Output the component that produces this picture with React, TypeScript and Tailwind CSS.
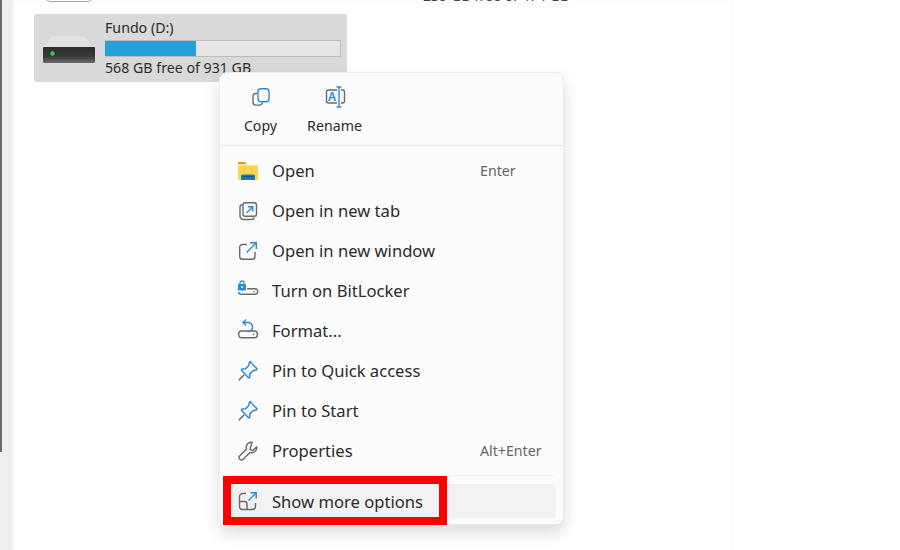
import React from "react";

const G = "#6a6a6a";
const B = "#2b8ad6";

function CopyIcon() {
  return (
    <svg width="20" height="20" viewBox="0 0 20 20" fill="none" strokeWidth="1.4">
      <rect x="7" y="1.7" width="11" height="13" rx="3" stroke={B} />
      <path d="M6 6.5H4.8A2.8 2.8 0 0 0 2 9.3v6a2.8 2.8 0 0 0 2.8 2.8h3.7a3 3 0 0 0 2.9-2.6" stroke={G} />
    </svg>
  );
}
function RenameIcon() {
  return (
    <svg width="22" height="22" viewBox="0 0 22 22" fill="none" strokeWidth="1.4">
      <path d="M12 4H3.5A2 2 0 0 0 1.5 6v9a2 2 0 0 0 2 2H12M16 4h1.5a2 2 0 0 1 2 2v9a2 2 0 0 1-2 2H16" stroke={G} />
      <path d="M14 1v20M11.5 1h5M11.5 21h5" stroke={B} />
      <text x="7" y="15" textAnchor="middle" fontSize="12" fontWeight="600" fill={B} stroke="none" fontFamily="Noto Sans, sans-serif">A</text>
    </svg>
  );
}
function FolderIcon() {
  return (
    <svg width="20" height="20" viewBox="0 0 20 20">
      <path d="M0 2a1 1 0 0 1 1-1h6l2 2.2H0z" fill="#d9a21b" />
      <path d="M0 4.2h19a1 1 0 0 1 1 1V18a1 1 0 0 1-1 1H1a1 1 0 0 1-1-1z" fill="#fcd54f" />
      <path d="M3 19v-4a1.500 1.500 0 0 1 1.500-1.500h11A1.500 1.500 0 0 1 17 15v4z" fill="#1a78c2" />
      <path d="M5.500 15.500h9" stroke="#0d4f8a" strokeWidth="1" />
    </svg>
  );
}
function NewTabIcon() {
  return (
    <svg width="20" height="20" viewBox="0 0 20 20" fill="none" strokeWidth="1.4">
      <path d="M4.500 3.800A2.500 2.500 0 0 0 2 6.300v8.700a3.500 3.500 0 0 0 3.500 3.500h8.200a2.500 2.500 0 0 0 2.400-2" stroke={G} />
      <rect x="5" y="1.700" width="13.500" height="13.500" rx="2.200" stroke={G} fill="#fbfbfb" />
      <path d="M8.500 12l6-6M10 5.700h4.700v4.700" stroke={B} />
    </svg>
  );
}
function NewWindowIcon() {
  return (
    <svg width="20" height="20" viewBox="0 0 20 20" fill="none" strokeWidth="1.4">
      <path d="M9 3.500H4.500A2.800 2.800 0 0 0 1.700 6.300v9.200a2.800 2.800 0 0 0 2.800 2.800h9.700a2.800 2.800 0 0 0 2.800-2.800V11" stroke={G} />
      <path d="M8.500 11.500L18 2M12 1.700h6.300V8" stroke={B} />
    </svg>
  );
}
function BitLockerIcon() {
  return (
    <svg width="20" height="20" viewBox="0 0 20 20" fill="none" className="overflow-visible">
      <path d="M9 7.700h8a2.600 2.600 0 0 1 0 5.600H3a2.300 2.300 0 0 1-2.300-2.300" stroke={G} strokeWidth="1.400" />
      <circle cx="16" cy="10.500" r="0.800" fill={G} />
      <rect x="0" y="3" width="8" height="6.500" rx="1" fill={B} />
      <path d="M2 3.500V2a2 2 0 0 1 4 0v1.500" stroke={B} strokeWidth="1.300" />
      <circle cx="4" cy="6.200" r="1" fill="#fff" />
    </svg>
  );
}
function FormatIcon() {
  return (
    <svg width="20" height="20" viewBox="0 0 20 20" fill="none" strokeWidth="1.400" className="overflow-visible">
      <rect x="0.700" y="10" width="18.600" height="6.800" rx="2.800" stroke={G} />
      <circle cx="15.500" cy="13.400" r="0.800" fill={G} />
      <path d="M9.500 10.500a4.400 4.400 0 0 0 5-4.800 4.200 4.200 0 0 0-4.300-4.200H5" stroke={B} />
      <path d="M8-1.500L5 1.500l3 3" stroke={B} />
    </svg>
  );
}
function PinIcon() {
  return (
    <svg width="20" height="20" viewBox="0 0 20 20" fill="none" strokeWidth="1.500">
      <path d="M12.500 1.200l6.300 6.300a.8.8 0 0 1-.4 1.300l-3.500.9-3 3.100-.3 3.200a.8.800 0 0 1-1.400.5L3.700 9.500a.8.800 0 0 1 .5-1.400l3.300-.3 3.100-3 .8-3.500a.8.8 0 0 1 1.100-.6z" stroke={B} strokeLinejoin="round" />
      <path d="M6.200 13.800L.8 19.200" stroke={G} />
    </svg>
  );
}
function WrenchIcon() {
  return (
    <svg width="20" height="20" viewBox="0 0 20 20" fill="none" stroke={G} strokeWidth="1.400" strokeLinejoin="round">
      <path d="M14.200 1.300a5 5 0 0 0-5.600 6.700L1.800 14.700a2.400 2.400 0 0 0 3.400 3.500l6.800-6.800a5 5 0 0 0 6.700-5.600l-3.500 3.400a2 2 0 0 1-2.400-.4 2 2 0 0 1-.4-2.400z" />
    </svg>
  );
}
function MoreIcon() {
  return (
    <svg width="20" height="20" viewBox="0 0 20 20" fill="none" strokeWidth="1.400">
      <path d="M8 2.500H4.500a3 3 0 0 0-3 3v10a3 3 0 0 0 3 3h10a3 3 0 0 0 3-3v-3.500" stroke={G} />
      <path d="M1.500 10.500h5a2.500 2.500 0 0 1 2.500 2.500v5.500" stroke={G} />
      <path d="M10.500 9.500L18 2M12.500 1.800h5.700v5.700" stroke={B} />
    </svg>
  );
}
function DriveIcon() {
  return (
    <svg width="52" height="28" viewBox="0 0 52 28">
      <defs>
        <linearGradient id="drive-body" x1="0" y1="0" x2="0" y2="1">
          <stop offset="0" stopColor="#2c2c2c" />
          <stop offset="0.6" stopColor="#3a3a3a" />
          <stop offset="1" stopColor="#6a6a6a" />
        </linearGradient>
      </defs>
      <path d="M9.500 1h31L52 12H0z" fill="#e1e1e1" />
      <rect x="0" y="12" width="52" height="16" rx="1" fill="url(#drive-body)" />
      <circle cx="9.500" cy="18.500" r="2.200" fill="#35d33a" />
    </svg>
  );
}

const rows: { icon: React.ReactNode; label: string; hint?: string }[] = [
  { icon: <FolderIcon />, label: "Open", hint: "Enter" },
  { icon: <NewTabIcon />, label: "Open in new tab" },
  { icon: <NewWindowIcon />, label: "Open in new window" },
  { icon: <BitLockerIcon />, label: "Turn on BitLocker" },
  { icon: <FormatIcon />, label: "Format..." },
  { icon: <PinIcon />, label: "Pin to Quick access" },
  { icon: <PinIcon />, label: "Pin to Start" },
  { icon: <WrenchIcon />, label: "Properties", hint: "Alt+Enter" },
];

export default function App() {
  return (
    <div className="relative flex h-[550px] w-[900px] overflow-hidden bg-white font-['Noto_Sans',sans-serif] text-[#2b2b2b]">
      <div className="h-full w-[12px] bg-[#eeeeee]">
        <div className="h-[452px] w-[2px] bg-[#6b6b6b]" />
      </div>
      <div className="h-full w-[2px] bg-[#f6f6f6]" />
      <main className="h-full w-[719px] border-r border-[#f7f7f7]">
        <div className="flex h-[3px] items-start overflow-hidden border-b border-[#f8f8f8]">
          <div className="ml-[29px] mt-[-8px] h-[10px] w-[52px] shrink-0 rounded-b-[8px] border border-[#a8a8a8]" />
          <div className="ml-[328px] mt-[-14px] whitespace-nowrap text-[14.200px] leading-[20px] text-[#444]">235 GB free of 474 GB</div>
        </div>
        <div className="ml-[20px] mt-[11px] flex h-[68px] w-[313px] rounded-[2px] bg-[#d9d9d9]">
          <div className="ml-[9px] mt-[21px] shrink-0">
            <DriveIcon />
          </div>
          <div className="ml-[10px] w-[236px] pt-[4px]">
            <div className="text-[14.200px] leading-[20px]">Fundo (D:)</div>
            <div className="mt-[2px] h-[17px] w-[236px] border border-[#bcbcbc] bg-[#e6e6e6]">
              <div className="-ml-px h-full w-[91px] bg-[#26a0da]" />
            </div>
            <div className="mt-[1px] whitespace-nowrap text-[14.200px] leading-[20px]">568 GB free of 931 GB</div>
          </div>
        </div>
      </main>

      <div className="absolute left-[219px] top-[72px] flex h-[453px] w-[345px] flex-col rounded-[8px] border border-[#ececec] bg-[#fbfbfb] shadow-[0_8px_16px_rgba(0,0,0,0.14)]">
        <div className="flex h-[73px] shrink-0 border-b border-[#e8e8e8] pl-[3.500px] pt-[13px]">
          <div className="flex w-[74px] flex-col items-center">
            <div className="flex h-[22px] items-center"><CopyIcon /></div>
            <div className="mt-[8px] text-[14.200px] leading-[20px]">Copy</div>
          </div>
          <div className="flex w-[74px] flex-col items-center">
            <div className="ml-[2px] flex h-[22px] items-center"><RenameIcon /></div>
            <div className="mt-[8px] text-[14.200px] leading-[20px]">Rename</div>
          </div>
        </div>
        <div className="pt-[5px]">
          {rows.map((r) => (
            <div key={r.label} className="flex h-[40px] items-center pl-[18px]">
              <div className="flex w-[20px] shrink-0 justify-center">{r.icon}</div>
              <div className="ml-[14px] flex-1 whitespace-nowrap text-[16.600px] leading-[24px]">{r.label}</div>
              {r.hint ? <div className="w-[83px] shrink-0 text-[14.200px] text-[#666]">{r.hint}</div> : null}
            </div>
          ))}
        </div>
        <div className="mx-[8px] mt-[4px] h-px bg-[#efefef]" />
        <div className="ml-[9px] mr-[7px] mt-[8px] flex h-[34px] items-center rounded-[4px] bg-[#f2f2f2] pl-[9px]">
          <MoreIcon />
          <div className="ml-[14px] whitespace-nowrap pt-[1px] text-[16.600px] leading-[24px]">Show more options</div>
        </div>
      </div>

      <div className="absolute left-[223px] top-[476px] h-[49px] w-[224px] border-[8px] border-[#ff0000]" />
    </div>
  );
}
